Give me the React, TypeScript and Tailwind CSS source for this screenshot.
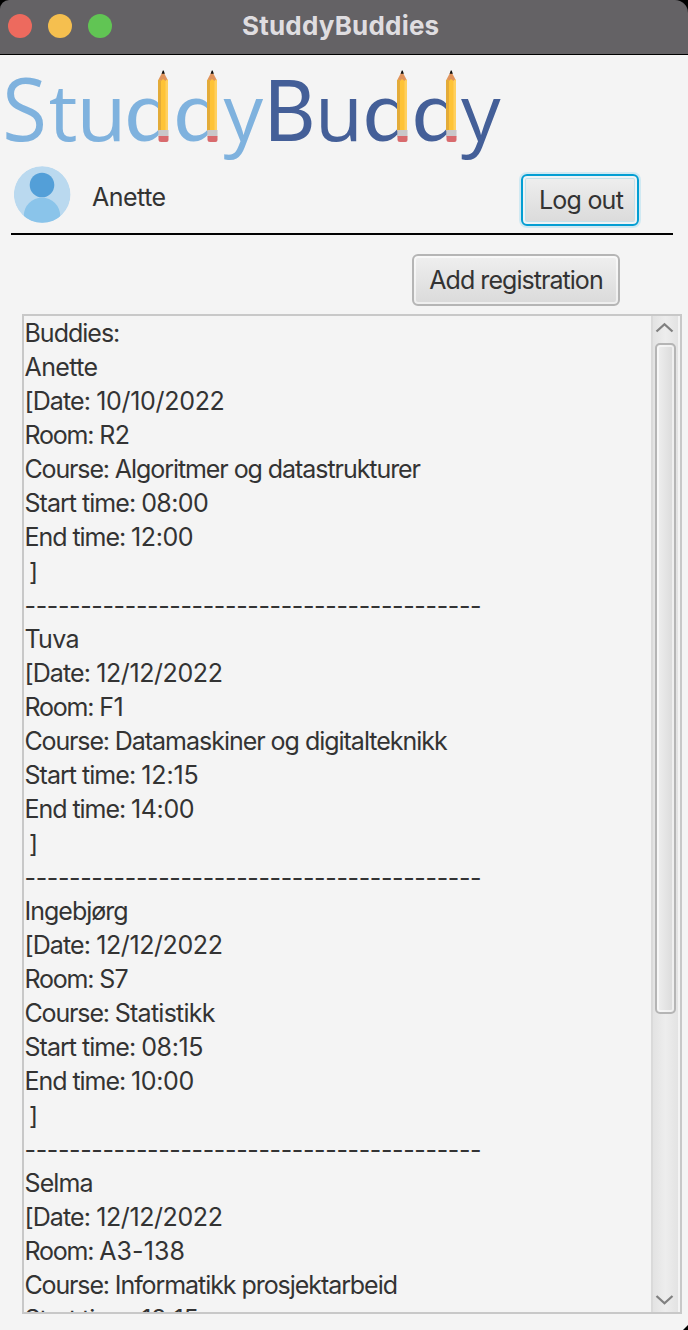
import React from "react";

type Part = [text: string, tracking: string];

const date = "tracking-[-0.9px]";
const room = "tracking-[-1.2px]";
const course = "tracking-[-1.15px]";
const start = "tracking-[-0.97px]";
const end = "tracking-[-1.05px]";

const bracket: Part[] = [[" ", "tracking-[-2.5px]"], ["]", "relative top-px"]];
const divider: Part[] = [["-----------------------------------------", "relative top-px tracking-[-0.36px]"]];

const rows: Part[][] = [
  [["Buddies:", "tracking-[-1px]"]],
  [["Anette", "tracking-[-0.6px]"]],
  [["[Date: ", date], ["10/10/2022", "tracking-[-0.3px]"]],
  [["Room: ", room], ["R2", "tracking-[-0.6px]"]],
  [["Course: ", course], ["Algoritmer og datastrukturer", "tracking-[-1.06px]"]],
  [["Start time: ", start], ["08:00", "tracking-[-0.6px]"]],
  [["End time: ", end], ["12:00", "tracking-[-0.4px]"]],
  bracket,
  divider,
  [["Tuva", "tracking-[-0.7px]"]],
  [["[Date: ", date], ["12/12/2022", "tracking-[-0.4px]"]],
  [["Room: ", room], ["F1", "tracking-[-0.4px]"]],
  [["Course: ", course], ["Datamaskiner og digitalteknikk", "tracking-[-1.02px]"]],
  [["Start time: ", start], ["12:15", "tracking-[-0.1px]"]],
  [["End time: ", end], ["14:00", "tracking-[-0.4px]"]],
  bracket,
  divider,
  [["Ingebjørg", "tracking-[-1px]"]],
  [["[Date: ", date], ["12/12/2022", "tracking-[-0.4px]"]],
  [["Room: ", room], ["S7", "tracking-[-0.6px]"]],
  [["Course: ", course], ["Statistikk", "tracking-[-0.75px]"]],
  [["Start time: ", start], ["08:15", "tracking-[-0.4px]"]],
  [["End time: ", end], ["10:00", "tracking-[-0.4px]"]],
  bracket,
  divider,
  [["Selma", "tracking-[-0.9px]"]],
  [["[Date: ", date], ["12/12/2022", "tracking-[-0.4px]"]],
  [["Room: ", room], ["A3-138", "tracking-[0.1px]"]],
  [["Course: ", course], ["Informatikk prosjektarbeid", "tracking-[-1.06px]"]],
  [["Start time: ", start], ["12:15", "tracking-[-0.1px]"]],
];

function Pencil({ x }: { x: number }) {
  return (
    <g transform={`translate(${x} 71)`}>
      <path d="M5 0L10 9.500V12H0V9.500Z" fill="#df935c" />
      <path d="M4.800 -0.500H5.700L6.800 2.800H3.600Z" fill="#111" />
      <path d="M0 9.500L1.500 8.500L3 10L5 8L7.500 10L9 8.500L10 9.500V60H0Z" fill="#fec336" />
      <path d="M0 9.500L1.500 8.500L3 10V60H0Z" fill="#e3ab38" />
      <path d="M7.500 10L9 8.500L10 9.500V60H7.500Z" fill="#ffd05e" />
      <path d="M0.300 59H10.500V65.500H0.300Z" fill="#c9c7c9" />
      <path d="M0.500 65H10.500V69Q10.500 71 8.500 71H3Q0.500 71 0.500 69Z" fill="#d86a6d" />
    </g>
  );
}

function Logo() {
  return (
    <svg viewBox="0 55 510 110" className="h-[110px] w-[510px] shrink-0">
      <g fill="#7fb2de" className="font-['Open_Sans',sans-serif]" fontSize="84">
        <text transform="translate(2.300 141.300) scale(0.97 1.035)">S</text>
        <text transform="translate(48.700 141) scale(0.96 0.93)">t</text>
        <text transform="translate(76.500 141) scale(0.97 0.93)">u</text>
        <g className="font-['Lato',sans-serif]" fontSize="86">
          <text transform="translate(124.500 141.200) scale(1 0.975)">d</text>
          <text transform="translate(173.500 141.200) scale(1 0.975)">d</text>
        </g>
        <text x="223.500" y="141" fontSize="79">y</text>
      </g>
      <g fill="#445f98" className="font-['Lato',sans-serif]" fontSize="86">
        <text transform="translate(263.800 141) scale(0.93 1)">B</text>
        <text transform="translate(315 141) scale(0.93 0.93)" className="font-['Open_Sans',sans-serif]" fontSize="84">u</text>
        <text transform="translate(362.800 141.200) scale(1 0.975)">d</text>
        <text transform="translate(411.800 141.200) scale(1 0.975)">d</text>
        <text x="461" y="141" className="font-['Open_Sans',sans-serif]" fontSize="79">y</text>
      </g>
      <Pencil x={158} />
      <Pencil x={207} />
      <Pencil x={397} />
      <Pencil x={446} />
    </svg>
  );
}

function Avatar() {
  return (
    <svg viewBox="0 0 57 57" className="ml-[3px] mt-[0.5px] size-[57px]">
      <clipPath id="avatar"><circle cx="28.200" cy="28.500" r="28.300" /></clipPath>
      <g clipPath="url(#avatar)">
        <circle cx="28.200" cy="28.500" r="28.500" fill="#bad9ef" />
        <circle cx="28" cy="50" r="18.300" fill="#8ac4ea" />
        <circle cx="28" cy="19" r="12.300" fill="#539fd8" />
      </g>
    </svg>
  );
}

export default function App() {
  return (
    <div className="flex h-[1330px] w-[688px] flex-col overflow-hidden bg-[#f4f4f4] font-['Inter',sans-serif] text-[25px] text-[#333]">
      <div className="shrink-0 bg-black">
        <header className="flex h-[55px] items-center rounded-tl-[9px] rounded-tr-[13px] border-b border-black bg-[#646265] pb-[2px] pl-2">
          <div className="flex gap-4">
            <i className="size-6 rounded-full bg-[#ed6a5e]" />
            <i className="size-6 rounded-full bg-[#f5bf4f]" />
            <i className="size-6 rounded-full bg-[#61c554]" />
          </div>
          <h1 className="-mt-px ml-[130px] text-[26px] leading-[34px] font-bold tracking-[0.2px] text-[#dfdde0]">StuddyBuddies</h1>
        </header>
      </div>
      <Logo />
      <div className="ml-[11px] flex h-[70px] w-[662px] shrink-0 items-start border-b-2 border-black">
        <Avatar />
        <span className="ml-[21px] mt-[15px] leading-[34px] tracking-[-0.5px]">Anette</span>
        <button className="ml-auto mr-[34px] mt-[9px] h-[52px] w-[118px] rounded-[6px] border-2 border-[#039ed3] bg-linear-to-b from-[#efefef] to-[#dadada] pl-[2px] pt-[2px] tracking-[-0.75px] shadow-[0_0_0_2px_#d0e9f2,inset_0_0_0_2px_#eef3f5,inset_0_0_0_3px_#c5e1ea]">Log out</button>
      </div>
      <button className="ml-[412px] mt-[19px] h-[52px] w-[208px] shrink-0 rounded-[6px] border-2 border-[#b5b5b5] bg-linear-to-b from-[#efefef] to-[#dadada] pt-[2px] tracking-[-0.95px] shadow-[inset_0_0_0_2px_#ffffff90]">Add registration</button>
      <main className="ml-[22px] mt-[8px] flex h-[1000px] w-[660px] shrink-0 overflow-hidden border-2 border-[#c8c8c8]">
        <div className="h-full flex-1 overflow-hidden pl-[0.5px]">
          {rows.map((parts, i) => (
            <p key={i} className="h-[34px] whitespace-pre leading-[34px]">
              {parts.map(([text, tracking], j) => (
                <span key={j} className={tracking}>{text}</span>
              ))}
            </p>
          ))}
        </div>
        <div className="mr-[2px] flex h-full w-[27px] shrink-0 flex-col items-start border-l-2 border-[#dadada] bg-linear-to-r from-[#e3e3e3] via-[#ededed] to-[#e3e3e3]">
          <svg viewBox="0 0 20 12" className="ml-[2px] mt-[6px] h-[12px] w-[20px]" fill="none" stroke="#808080" strokeWidth="2.300">
            <path d="M1.500 9.500L9.500 2.200L17.500 9.500" />
          </svg>
          <div className="ml-[2px] mt-[9px] h-[671px] w-[21px] rounded-[5px] border-2 border-[#b5b5b5] bg-linear-to-r from-[#efefef] to-[#dadada] shadow-[inset_0_0_0_2px_#ffffff90]" />
          <svg viewBox="0 0 20 12" className="mb-[6px] ml-[2px] mt-auto h-[12px] w-[20px]" fill="none" stroke="#808080" strokeWidth="2.300">
            <path d="M1.500 2L9.500 9.300L17.500 2" />
          </svg>
        </div>
      </main>
      <svg viewBox="0 0 5 5" className="ml-auto mt-[11px] size-[5px] shrink-0">
        <path d="M5 0V5H0Z" fill="#000" />
      </svg>
    </div>
  );
}
